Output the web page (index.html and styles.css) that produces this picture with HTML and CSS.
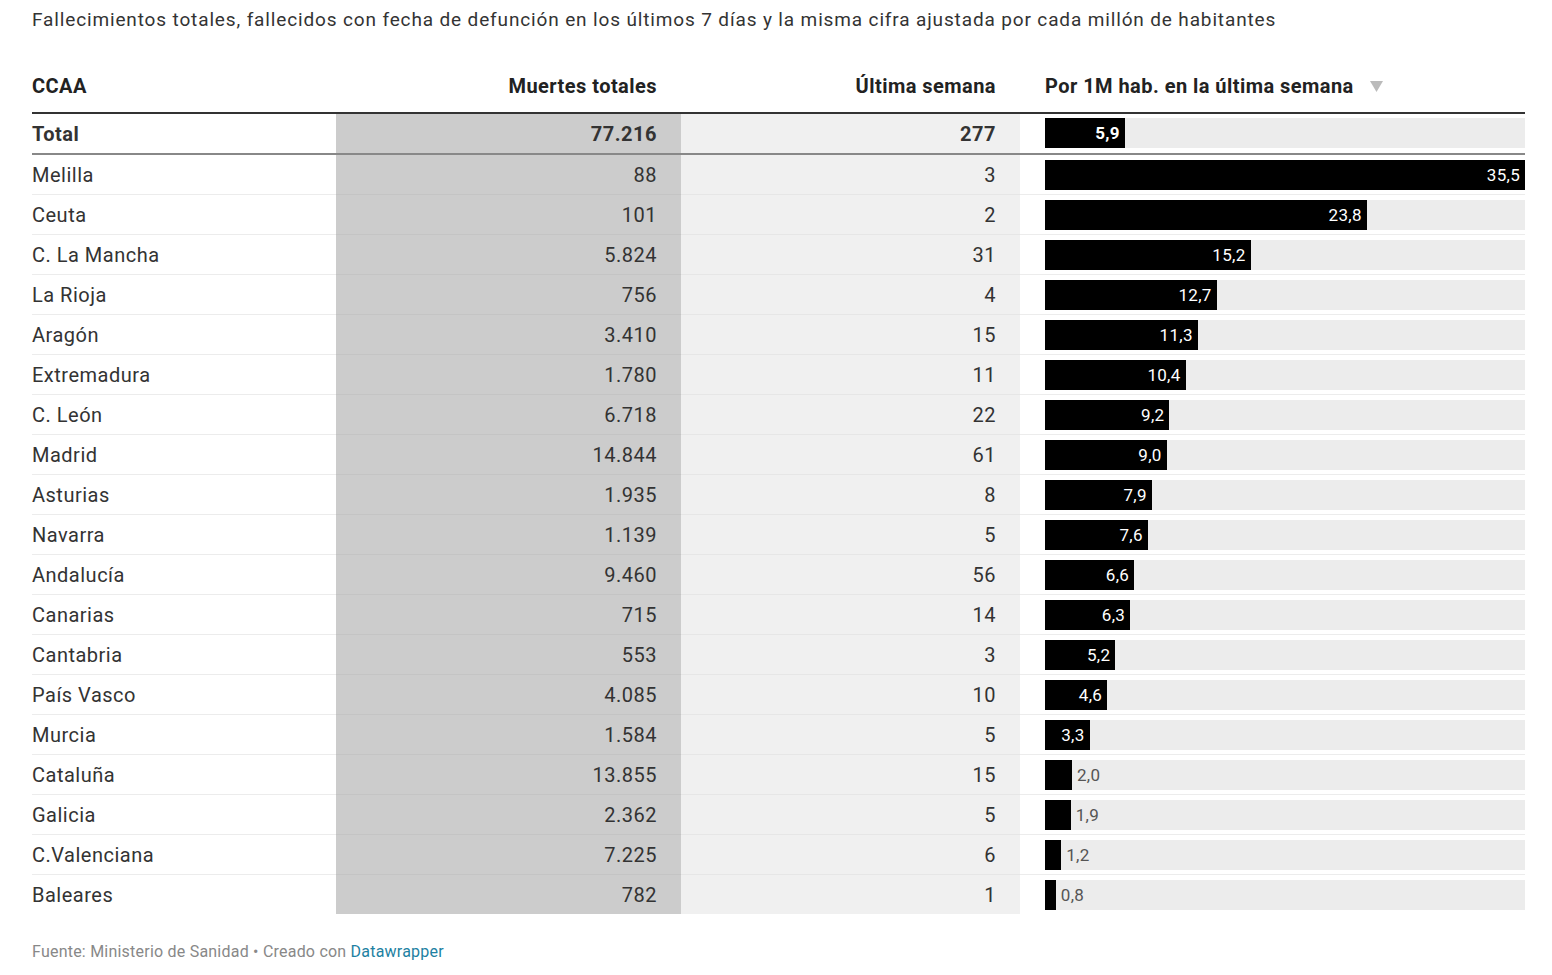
FILE: index.html
```html
<!DOCTYPE html>
<html lang="es">
<head>
<meta charset="utf-8">
<title>Fallecimientos por CCAA</title>
<link rel="stylesheet" href="styles.css">
</head>
<body>
<div class="chart">
  <p class="intro">Fallecimientos totales, fallecidos con fecha de defunción en los últimos 7 días y la misma cifra ajustada por cada millón de habitantes</p>
  <table class="dw">
    <colgroup>
      <col class="c-name"><col class="c-total"><col class="c-week"><col class="c-bar">
    </colgroup>
    <thead>
      <tr>
        <th class="name">CCAA</th>
        <th class="num">Muertes totales</th>
        <th class="num">Última semana</th>
        <th class="barh">Por 1M hab. en la última semana<svg class="sort" width="13" height="11" viewBox="0 0 13 11" aria-hidden="true"><polygon points="0,0 13,0 6.5,11" fill="#bbbbbb"/></svg></th>
      </tr>
    </thead>
    <tbody>
      <tr class="total">
        <td class="name">Total</td>
        <td class="num dark">77.216</td>
        <td class="num light">277</td>
        <td class="barcell"><div class="track"><div class="bar" style="width:16.62%"><span class="lbl">5,9</span></div></div></td>
      </tr>
      <tr><td class="name">Melilla</td><td class="num dark">88</td><td class="num light">3</td><td class="barcell"><div class="track"><div class="bar" style="width:100%"><span class="lbl">35,5</span></div></div></td></tr>
      <tr><td class="name">Ceuta</td><td class="num dark">101</td><td class="num light">2</td><td class="barcell"><div class="track"><div class="bar" style="width:67.04%"><span class="lbl">23,8</span></div></div></td></tr>
      <tr><td class="name">C. La Mancha</td><td class="num dark">5.824</td><td class="num light">31</td><td class="barcell"><div class="track"><div class="bar" style="width:42.82%"><span class="lbl">15,2</span></div></div></td></tr>
      <tr><td class="name">La Rioja</td><td class="num dark">756</td><td class="num light">4</td><td class="barcell"><div class="track"><div class="bar" style="width:35.77%"><span class="lbl">12,7</span></div></div></td></tr>
      <tr><td class="name">Aragón</td><td class="num dark">3.410</td><td class="num light">15</td><td class="barcell"><div class="track"><div class="bar" style="width:31.83%"><span class="lbl">11,3</span></div></div></td></tr>
      <tr><td class="name">Extremadura</td><td class="num dark">1.780</td><td class="num light">11</td><td class="barcell"><div class="track"><div class="bar" style="width:29.30%"><span class="lbl">10,4</span></div></div></td></tr>
      <tr><td class="name">C. León</td><td class="num dark">6.718</td><td class="num light">22</td><td class="barcell"><div class="track"><div class="bar" style="width:25.92%"><span class="lbl">9,2</span></div></div></td></tr>
      <tr><td class="name">Madrid</td><td class="num dark">14.844</td><td class="num light">61</td><td class="barcell"><div class="track"><div class="bar" style="width:25.35%"><span class="lbl">9,0</span></div></div></td></tr>
      <tr><td class="name">Asturias</td><td class="num dark">1.935</td><td class="num light">8</td><td class="barcell"><div class="track"><div class="bar" style="width:22.25%"><span class="lbl">7,9</span></div></div></td></tr>
      <tr><td class="name">Navarra</td><td class="num dark">1.139</td><td class="num light">5</td><td class="barcell"><div class="track"><div class="bar" style="width:21.41%"><span class="lbl">7,6</span></div></div></td></tr>
      <tr><td class="name">Andalucía</td><td class="num dark">9.460</td><td class="num light">56</td><td class="barcell"><div class="track"><div class="bar" style="width:18.59%"><span class="lbl">6,6</span></div></div></td></tr>
      <tr><td class="name">Canarias</td><td class="num dark">715</td><td class="num light">14</td><td class="barcell"><div class="track"><div class="bar" style="width:17.75%"><span class="lbl">6,3</span></div></div></td></tr>
      <tr><td class="name">Cantabria</td><td class="num dark">553</td><td class="num light">3</td><td class="barcell"><div class="track"><div class="bar" style="width:14.65%"><span class="lbl">5,2</span></div></div></td></tr>
      <tr><td class="name">País Vasco</td><td class="num dark">4.085</td><td class="num light">10</td><td class="barcell"><div class="track"><div class="bar" style="width:12.96%"><span class="lbl">4,6</span></div></div></td></tr>
      <tr><td class="name">Murcia</td><td class="num dark">1.584</td><td class="num light">5</td><td class="barcell"><div class="track"><div class="bar" style="width:9.30%"><span class="lbl">3,3</span></div></div></td></tr>
      <tr><td class="name">Cataluña</td><td class="num dark">13.855</td><td class="num light">15</td><td class="barcell"><div class="track"><div class="bar" style="width:5.63%"></div><span class="out">2,0</span></div></td></tr>
      <tr><td class="name">Galicia</td><td class="num dark">2.362</td><td class="num light">5</td><td class="barcell"><div class="track"><div class="bar" style="width:5.35%"></div><span class="out">1,9</span></div></td></tr>
      <tr><td class="name">C.Valenciana</td><td class="num dark">7.225</td><td class="num light">6</td><td class="barcell"><div class="track"><div class="bar" style="width:3.38%"></div><span class="out">1,2</span></div></td></tr>
      <tr class="last"><td class="name">Baleares</td><td class="num dark">782</td><td class="num light">1</td><td class="barcell"><div class="track"><div class="bar" style="width:2.25%"></div><span class="out">0,8</span></div></td></tr>
    </tbody>
  </table>
  <p class="footer">Fuente: Ministerio de Sanidad • Creado con <a href="#" class="dwlink">Datawrapper</a></p>
</div>
</body>
</html>
```

FILE: styles.css
```css
* { box-sizing: border-box; }
html, body { margin: 0; padding: 0; background: #fff; }
body {
  font-family: Roboto, "Noto Sans", "Liberation Sans", sans-serif;
  color: #333;
}
.chart {
  width: 1552px;
  padding: 0 27px 0 32px;
}
.intro {
  margin: 0;
  padding-top: 8px;
  font-size: 19px;
  line-height: 24px;
  letter-spacing: 0.86px;
  color: #333;
}
.dw {
  margin-top: 42px;
  width: 1493px;
  border-collapse: separate;
  border-spacing: 0;
  table-layout: fixed;
}
.c-name { width: 304px; }
.c-total { width: 345px; }
.c-week { width: 339px; }
.c-bar { width: 505px; }
.dw th {
  font-weight: bold;
  font-size: 20px;
  line-height: 24px;
  letter-spacing: 0.45px;
  color: #222;
  padding: 0 24px 14px 0;
  vertical-align: bottom;
  border-bottom: 2px solid #333;
  text-align: left;
  white-space: nowrap;
}
.dw th.num { text-align: right; }
.dw th.barh { padding-left: 25px; padding-right: 0; }
.sort {
  margin-left: 16px;
  display: inline-block;
  vertical-align: 1px;
}
.dw td {
  padding: 0 24px 0 0;
  font-size: 20px;
  line-height: 24px;
  letter-spacing: 0.5px;
  vertical-align: middle;
  border-bottom: 1px solid #ececec;
  white-space: nowrap;
}
.dw td.name { padding-left: 0; }
.dw td.num { text-align: right; }
.dw td.dark { background: #cccccc; border-bottom-color: #c4c4c4; }
.dw td.light { background: #f0f0f0; border-bottom-color: #e6e6e6; }
.dw tr.total td {
  font-weight: bold;
  border-bottom: 2px solid #888;
}
.dw tr.last td { border-bottom: none; }
.dw td.barcell {
  padding: 5px 0 4px 25px;
  background: #fff;
}
.dw tr.total td.barcell { padding: 4px 0 5px 25px; }
.track {
  height: 30px;
  background: #ececec;
  display: flex;
  align-items: stretch;
}
.bar {
  background: #000;
  height: 30px;
  display: flex;
  justify-content: flex-end;
  align-items: center;
  flex: none;
}
.lbl {
  color: #fff;
  font-size: 17px;
  line-height: 30px;
  letter-spacing: 0.3px;
  padding-right: 5px;
}
.total .lbl { font-weight: bold; }
.out {
  color: #555;
  font-size: 17px;
  line-height: 30px;
  letter-spacing: 0.3px;
  padding-left: 5px;
}
.footer {
  margin: 28px 0 0;
  font-size: 16px;
  line-height: 20px;
  letter-spacing: 0.22px;
  color: #888;
}
.dwlink {
  color: #1d81a2;
  text-decoration: none;
}
```
